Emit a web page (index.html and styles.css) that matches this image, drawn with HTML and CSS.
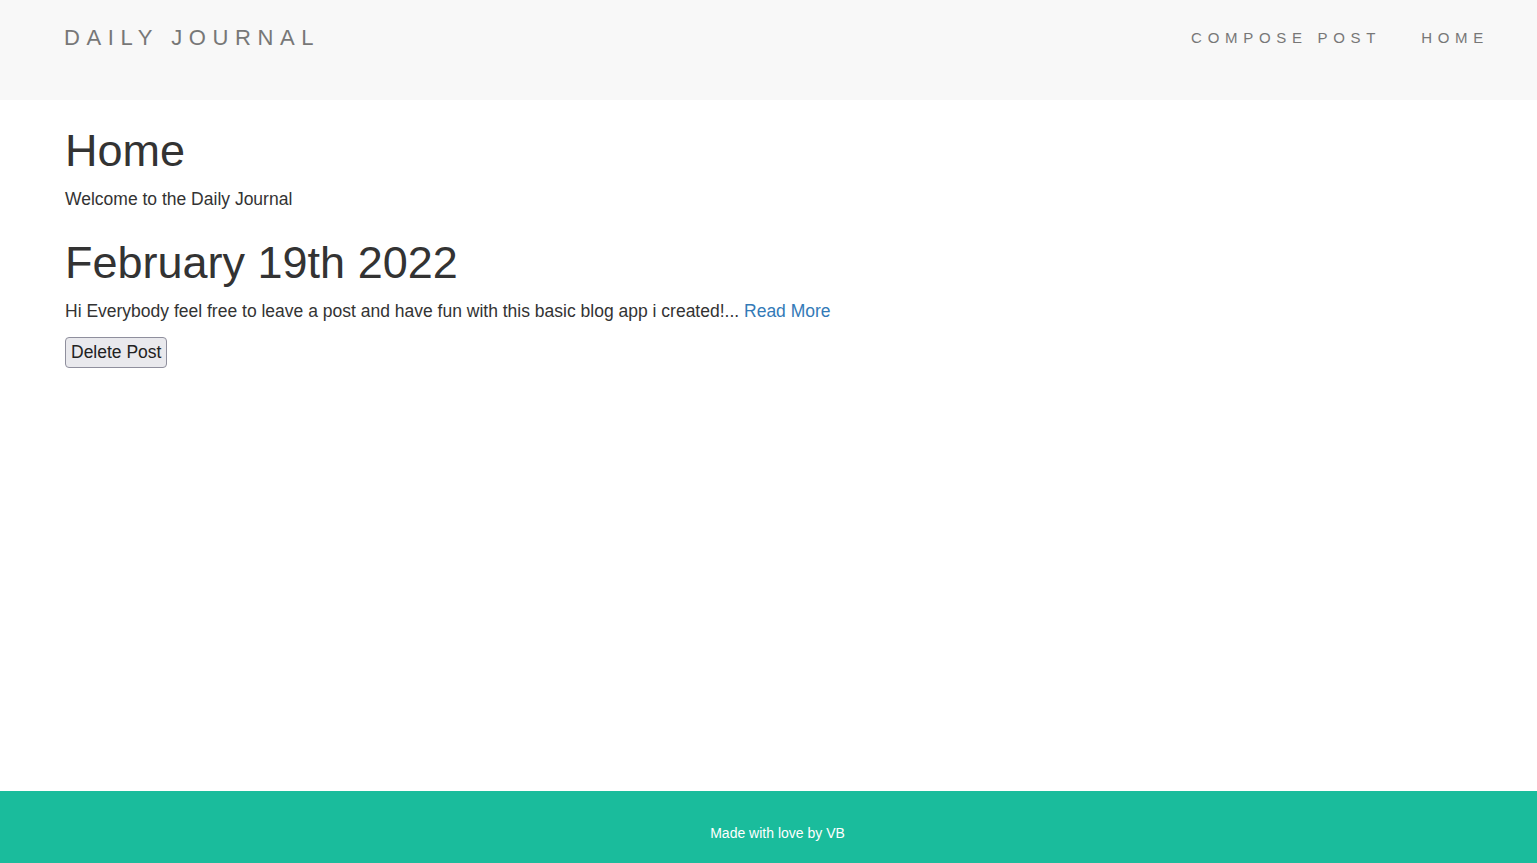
FILE: index.html
```html
<!DOCTYPE html>
<html lang="en">
<head>
<meta charset="utf-8">
<title>Daily Journal</title>
<link rel="stylesheet" href="styles.css">
</head>
<body>
<header class="navbar">
  <a class="brand" href="#">DAILY JOURNAL</a>
  <nav class="nav-links">
    <a href="#">COMPOSE POST</a>
    <a href="#">HOME</a>
  </nav>
</header>
<main class="container">
  <h1>Home</h1>
  <p>Welcome to the Daily Journal</p>
  <h1>February 19th 2022</h1>
  <p>Hi Everybody feel free to leave a post and have fun with this basic blog app i created!... <a class="link" href="#">Read More</a></p>
  <form class="delete-form">
    <button type="button" class="btn">Delete Post</button>
  </form>
</main>
<footer class="footer">
  <p class="footer-text">Made with love by VB</p>
</footer>
</body>
</html>
```
FILE: styles.css
```css
html, body {
  margin: 0;
  padding: 0;
}
body {
  min-height: 100vh;
  display: flex;
  flex-direction: column;
  font-family: "Liberation Sans", Arial, sans-serif;
  font-size: 17.5px;
  line-height: 25.7px;
  color: #333333;
  background: #ffffff;
}
a {
  text-decoration: none;
}
.navbar {
  height: 100px;
  background: #f8f8f8;
  display: flex;
  justify-content: space-between;
  align-items: flex-start;
  box-sizing: border-box;
  padding: 0 28px 0 64px;
}
.brand {
  margin-top: 27px;
  font-size: 22px;
  line-height: 22px;
  letter-spacing: 0.3em;
  color: #777777;
}
.nav-links {
  display: flex;
  margin-top: 30px;
}
.nav-links a {
  font-size: 15px;
  line-height: 15px;
  letter-spacing: 5.7px;
  color: #777777;
  padding: 0 20px;
}
.container {
  flex: 1;
  padding: 0 65px;
}
h1 {
  font-size: 45px;
  line-height: 49.5px;
  font-weight: 500;
  margin: 26px 0 11px;
}
p {
  margin: 0 0 13px;
}
.link {
  color: #337ab7;
}
.delete-form {
  margin: 0;
}
.btn {
  display: block;
  font-family: "Liberation Sans", Arial, sans-serif;
  font-size: 17.5px;
  line-height: 21px;
  color: #222222;
  background: #e9e9ed;
  border: 1px solid #8f8f9d;
  border-radius: 4px;
  padding: 4px 5px;
}
.footer {
  background: #1abc9c;
  padding: 32px 0 20px 18px;
  text-align: center;
}
.footer-text {
  margin: 0;
  font-size: 14px;
  line-height: 20px;
  color: #ffffff;
}
```
